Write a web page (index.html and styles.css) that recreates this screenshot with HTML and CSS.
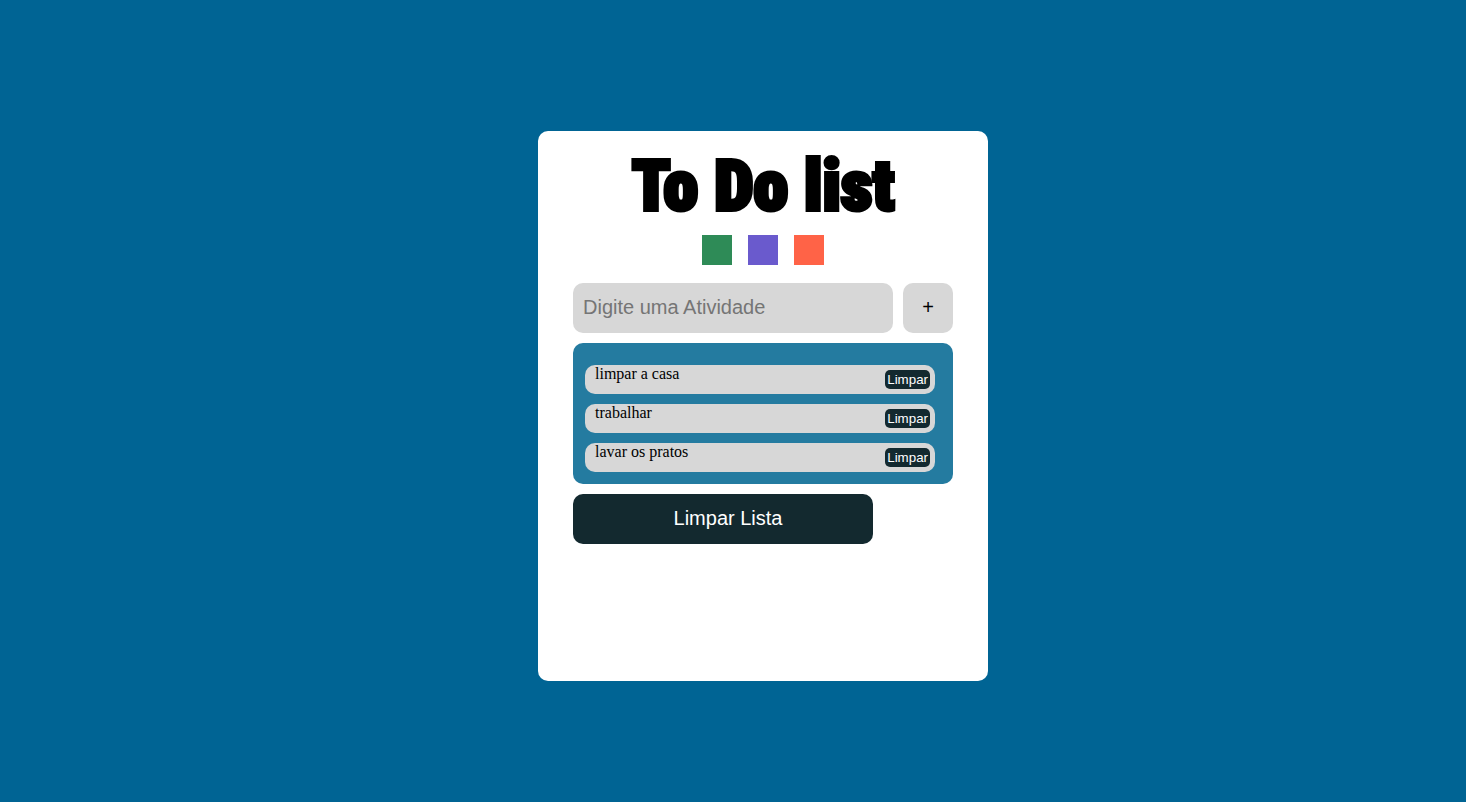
FILE: index.html
```html
<!DOCTYPE html>
<html lang="pt-BR">
<head>
<meta charset="utf-8">
<meta name="viewport" content="width=device-width, initial-scale=1">
<title>To Do list</title>
<link rel="stylesheet" href="styles.css">
</head>
<body>
<main class="card">
  <h1 class="title">To Do list</h1>
  <div class="themes">
    <button type="button" class="theme theme-green" aria-label="Tema verde"></button>
    <button type="button" class="theme theme-purple" aria-label="Tema roxo"></button>
    <button type="button" class="theme theme-orange" aria-label="Tema laranja"></button>
  </div>
  <form class="entry">
    <input class="entry-input" type="text" placeholder="Digite uma Atividade" aria-label="Digite uma Atividade">
    <button class="entry-add" type="button">+</button>
  </form>
  <ul class="tasks">
    <li class="task"><span>limpar a casa</span><button type="button" class="task-clear">Limpar</button></li>
    <li class="task"><span>trabalhar</span><button type="button" class="task-clear">Limpar</button></li>
    <li class="task"><span>lavar os pratos</span><button type="button" class="task-clear">Limpar</button></li>
  </ul>
  <button type="button" class="clear-all">Limpar Lista</button>
</main>
</body>
</html>
```

FILE: styles.css
```css
* {
  box-sizing: border-box;
}

body {
  margin: 0;
  min-height: 100vh;
  padding: 10px 0 0 60px;
  display: flex;
  align-items: center;
  justify-content: center;
  background: #006494;
  font-family: "Liberation Serif", "Times New Roman", serif;
  font-size: 16px;
}

button,
input {
  border: 0;
  font-family: "Liberation Sans", Arial, sans-serif;
}

.card {
  width: 100%;
  max-width: 450px;
  min-height: 550px;
  padding: 14px 35px;
  background: #fff;
  border-radius: 10px;
}

.title {
  margin: 0 0 8px;
  font-family: Impact, "Roboto Condensed", "Open Sans Condensed", "Noto Sans Condensed", sans-serif;
  font-size: 70px;
  line-height: 82px;
  font-weight: 900;
  text-align: center;
  -webkit-text-stroke: 4px #000;
}

.themes {
  display: flex;
  justify-content: center;
  gap: 16px;
  margin-bottom: 18px;
}

.theme {
  width: 30px;
  height: 30px;
  padding: 0;
}

.theme-green {
  background: seagreen;
}

.theme-purple {
  background: slateblue;
}

.theme-orange {
  background: tomato;
}

.entry {
  display: flex;
  gap: 10px;
  margin-bottom: 10px;
}

.entry-input {
  flex: 1;
  min-width: 0;
  height: 50px;
  padding: 0 10px 2px;
  background: #d7d7d7;
  border-radius: 10px;
  font-size: 20px;
}

.entry-input::placeholder {
  color: #757575;
}

.entry-add {
  width: 50px;
  height: 50px;
  padding: 0 0 2px;
  background: #d7d7d7;
  border-radius: 10px;
  color: #000;
  font-size: 20px;
}

.tasks {
  display: flex;
  flex-direction: column;
  gap: 10px;
  margin: 0 0 10px;
  padding: 22px 18px 12px 12px;
  list-style: none;
  background: #247ba0;
  border-radius: 10px;
}

.task {
  display: flex;
  justify-content: space-between;
  padding: 0 5px 0 10px;
  background: #d7d7d7;
  border-radius: 10px;
  line-height: 18px;
}

.task-clear {
  margin: 5px 0;
  padding: 2px;
  background: #13292f;
  border-radius: 5px;
  color: #fff;
  line-height: 15px;
}

.clear-all {
  display: block;
  width: 300px;
  max-width: 100%;
  height: 50px;
  padding: 0 0 2px 10px;
  background: #13292f;
  border-radius: 10px;
  color: #fff;
  font-size: 20px;
}
```
